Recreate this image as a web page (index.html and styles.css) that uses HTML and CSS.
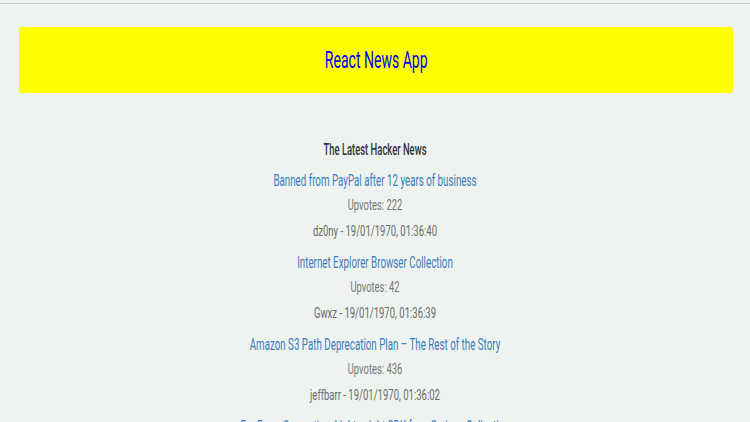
FILE: index.html
```html
<!DOCTYPE html>
<html>
<head>
<meta charset="utf-8">
<title>React News App</title>
<link rel="stylesheet" href="styles.css">
</head>
<body>
<div class="page">
  <header class="banner">
    <h1 class="banner-title">React News App</h1>
  </header>
  <main class="news">
    <h2 class="news-heading">The Latest Hacker News</h2>
    <div class="item">
      <a class="item-link" href="#">Banned from PayPal after 12 years of business</a>
      <p class="item-votes">Upvotes: 222</p>
      <p class="item-meta">dz0ny - 19/01/1970, 01:36:40</p>
    </div>
    <div class="item">
      <a class="item-link" href="#">Internet Explorer Browser Collection</a>
      <p class="item-votes">Upvotes: 42</p>
      <p class="item-meta">Gwxz - 19/01/1970, 01:36:39</p>
    </div>
    <div class="item">
      <a class="item-link" href="#">Amazon S3 Path Deprecation Plan – The Rest of the Story</a>
      <p class="item-votes">Upvotes: 436</p>
      <p class="item-meta">jeffbarr - 19/01/1970, 01:36:02</p>
    </div>
    <div class="item">
      <a class="item-link" href="#">For Every Generation, Lightweight SDK for a Serious Collection</a>
      <p class="item-votes">Upvotes: 118</p>
      <p class="item-meta">tosh - 19/01/1970, 01:35:51</p>
    </div>
  </main>
</div>
</body>
</html>
```
FILE: styles.css
```css
html, body {
  margin: 0;
  padding: 0;
  background: #eef3ef;
}
body {
  font-family: Roboto, "Liberation Sans", sans-serif;
  overflow: hidden;
}
.page {
  margin-top: 3px;
  border-top: 1px solid #c4c6c4;
  padding-top: 23px;
}
.banner {
  margin: 0 17px 0 19px;
  height: 66px;
  background: #ffff00;
  border-radius: 2px;
  display: flex;
  align-items: center;
  justify-content: center;
}
.banner-title {
  margin: 0;
  font-size: 23px;
  font-weight: 400;
  color: #0000ff;
  line-height: 30px;
  transform: scaleX(0.61);
  padding-top: 2px;
}
.news {
  margin-top: 40px;
  text-align: center;
}
.news-heading {
  margin: 0;
  height: 30px;
  padding-top: 2px;
  line-height: 30px;
  font-size: 16px;
  font-weight: 500;
  color: #333;
  transform: scaleX(0.59);
}
.item-link {
  display: block;
  height: 30px;
  line-height: 30px;
  font-size: 17px;
  color: #3a7bbf;
  text-decoration: none;
  transform: scaleX(0.575);
}
.item-votes {
  margin: 0;
  height: 16px;
  padding-top: 2px;
  line-height: 16px;
  font-size: 14px;
  color: #777;
  transform: scaleX(0.67);
}
.item-meta {
  margin: 0;
  height: 32px;
  padding-top: 2px;
  line-height: 32px;
  font-size: 14px;
  color: #6a6a6a;
  transform: scaleX(0.68);
}
```
